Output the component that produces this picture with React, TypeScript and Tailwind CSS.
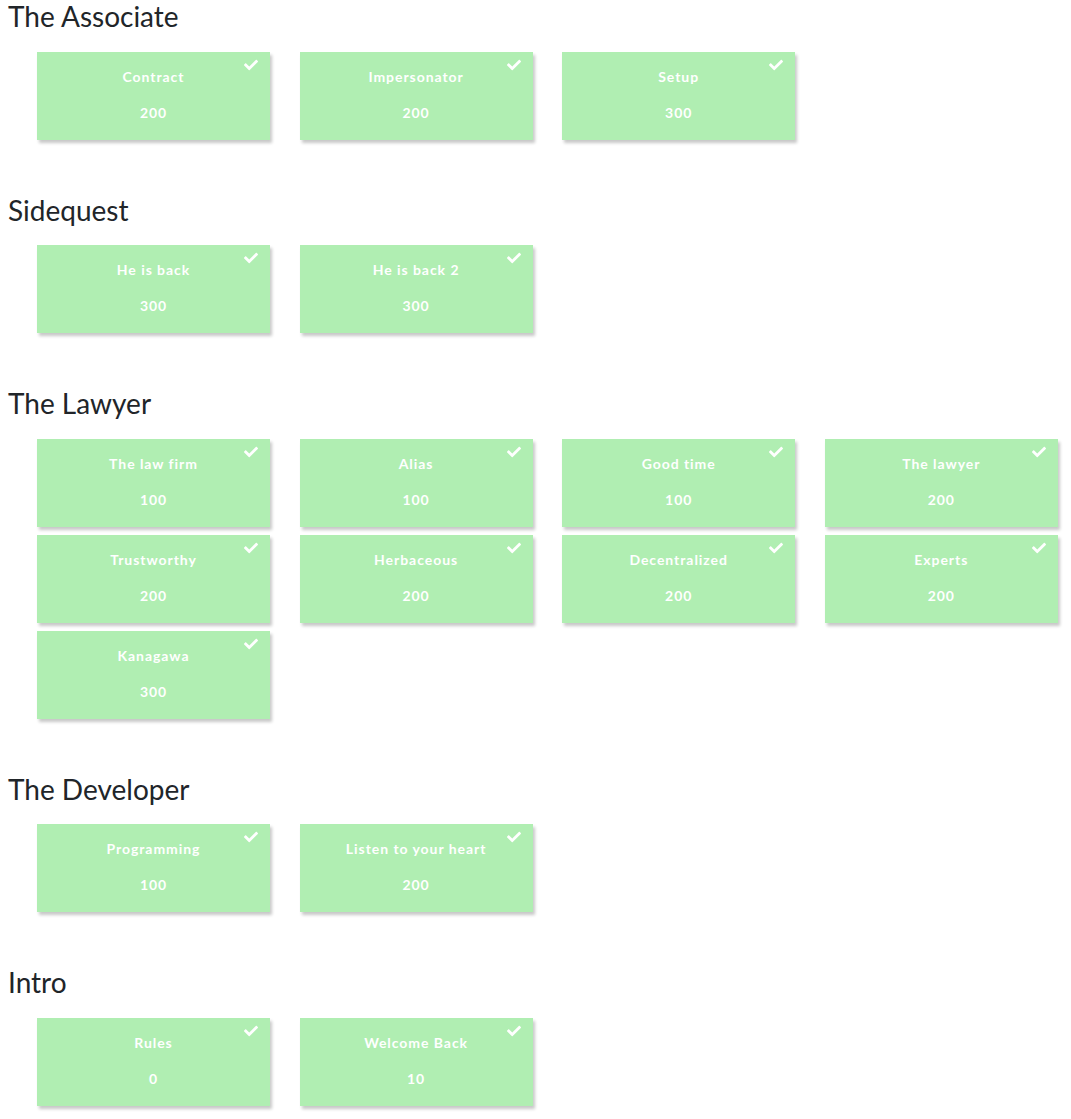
import React from "react";
import { FaCheck } from "react-icons/fa";

interface Challenge {
  name: string;
  points: number;
}

interface Category {
  title: string;
  challenges: Challenge[];
}

const categories: Category[] = [
  {
    title: "The Associate",
    challenges: [
      { name: "Contract", points: 200 },
      { name: "Impersonator", points: 200 },
      { name: "Setup", points: 300 },
    ],
  },
  {
    title: "Sidequest",
    challenges: [
      { name: "He is back", points: 300 },
      { name: "He is back 2", points: 300 },
    ],
  },
  {
    title: "The Lawyer",
    challenges: [
      { name: "The law firm", points: 100 },
      { name: "Alias", points: 100 },
      { name: "Good time", points: 100 },
      { name: "The lawyer", points: 200 },
      { name: "Trustworthy", points: 200 },
      { name: "Herbaceous", points: 200 },
      { name: "Decentralized", points: 200 },
      { name: "Experts", points: 200 },
      { name: "Kanagawa", points: 300 },
    ],
  },
  {
    title: "The Developer",
    challenges: [
      { name: "Programming", points: 100 },
      { name: "Listen to your heart", points: 200 },
    ],
  },
  {
    title: "Intro",
    challenges: [
      { name: "Rules", points: 0 },
      { name: "Welcome Back", points: 10 },
    ],
  },
];

function ChallengeCard({ name, points }: Challenge) {
  return (
    <div className="relative h-[88px] bg-[#b0eeb2] shadow-[2px_3px_3px_rgba(0,0,0,0.22)] flex flex-col items-center pt-[15px] text-white font-bold text-[14px] tracking-[0.95px]">
      <FaCheck className="absolute top-[6px] right-[12px] text-[14px]" />
      <div className="leading-[20px]">{name}</div>
      <div className="leading-[20px] mt-[16px]">{points}</div>
    </div>
  );
}

export default function App() {
  return (
    <div
      className="bg-white min-h-[1119px] pl-2 text-[#212529]"
      style={{ fontFamily: "Lato, 'Open Sans', sans-serif" }}
    >
      {categories.map((cat) => (
        <section key={cat.title} className="pb-[54px]">
          <h3 className="text-[28px] leading-[1.2] m-0 font-normal">{cat.title}</h3>
          <div className="mt-[18px] ml-[29px] grid grid-cols-[repeat(4,233px)] gap-x-[29.6px] gap-y-[8px]">
            {cat.challenges.map((ch) => (
              <ChallengeCard key={ch.name} name={ch.name} points={ch.points} />
            ))}
          </div>
        </section>
      ))}
    </div>
  );
}
